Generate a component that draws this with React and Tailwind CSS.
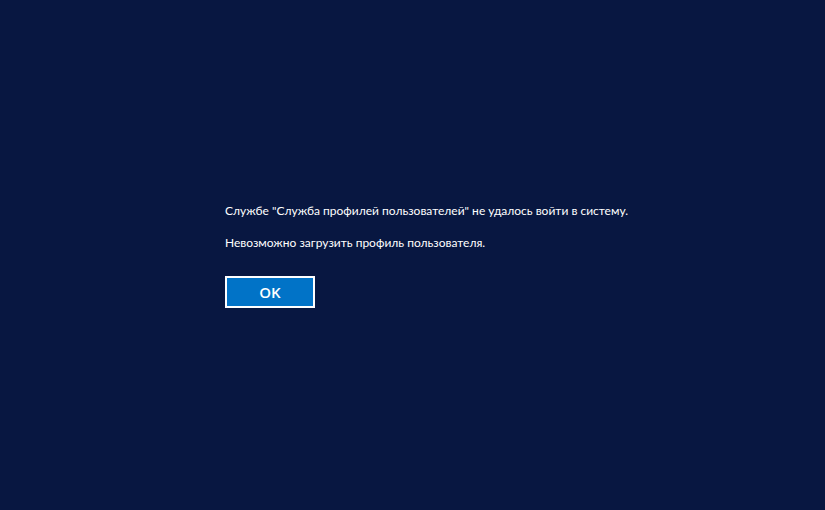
export default function App() {
  return (
    <main className="flex min-h-screen items-center bg-[#081741] pt-px font-['Lato','Open_Sans',sans-serif] text-white">
      <section className="ml-[225px] flex flex-col items-start text-[12px] leading-4" role="alertdialog" aria-labelledby="message">
        <div id="message" className="flex flex-col gap-4">
          <p>Службе "Служба профилей пользователей" не удалось войти в систему.</p>
          <p>Невозможно загрузить профиль пользователя.</p>
        </div>
        <button type="button" className="mt-[25px] h-8 w-[90px] border-2 border-white bg-[#0173c7] font-['Open_Sans',sans-serif] text-[15px] font-semibold leading-5">
          OK
        </button>
      </section>
    </main>
  );
}
